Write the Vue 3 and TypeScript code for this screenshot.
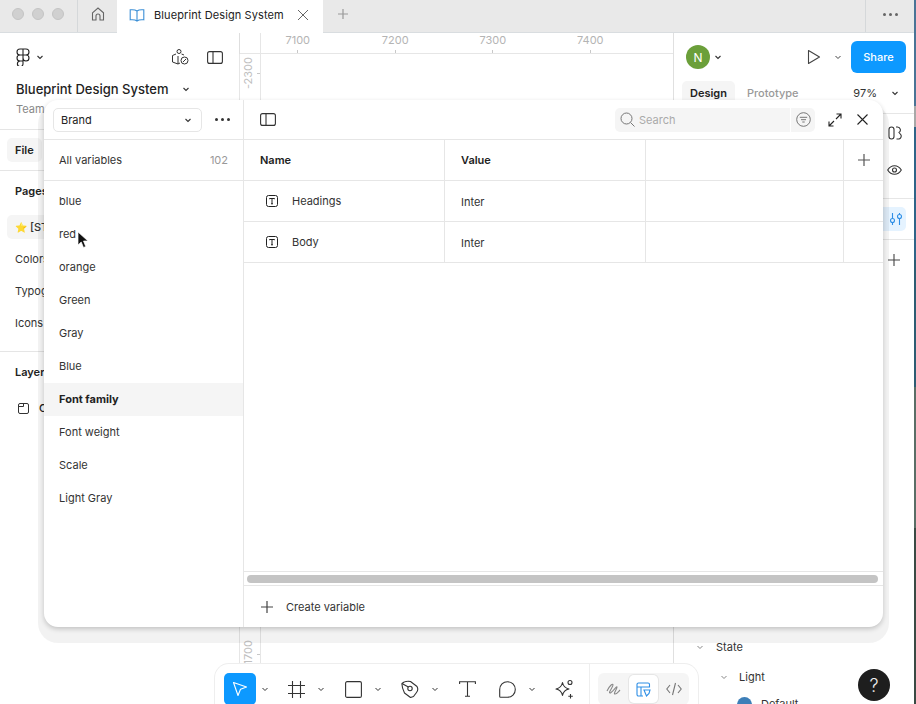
<script setup lang="ts">
const groups = ['blue', 'red', 'orange', 'Green', 'Gray', 'Blue', 'Font family', 'Font weight', 'Scale', 'Light Gray']
const rows = ['Headings', 'Body']
const marks = ['7100', '7200', '7300', '7400']
const chev = 'M1.5 3 4 5.5 6.5 3'
</script>

<template>
  <div class="app">
    <header class="tabs">
      <div class="lights"><i></i><i></i><i></i></div>
      <div class="home">
        <svg width="16" height="16" viewBox="0 0 16 16" fill="none" stroke="#666" stroke-width="1.1"><path d="M2.5 6.8 8 2l5.500 4.800V14h-3.500v-4a2 2 0 0 0-4 0v4H2.500z" /></svg>
      </div>
      <div class="tab">
        <svg width="16" height="14" viewBox="0 0 16 14" fill="none" stroke="#3b8fd6" stroke-width="1.100"><path d="M8 3C6.500 1.800 4 1.500 1.200 1.800v10C4 11.500 6.500 11.800 8 13c1.500-1.200 4-1.500 6.800-1.200v-10C12 1.500 9.500 1.800 8 3zv10" /></svg>
        <span class="tab-name">Blueprint Design System</span>
        <svg width="12" height="12" viewBox="0 0 12 12" stroke="#666" stroke-width="1"><path d="M1 1l10 10M11 1 1 11" /></svg>
      </div>
      <div class="newtab">
        <svg width="12" height="12" viewBox="0 0 12 12" stroke="#999" stroke-width="1.200"><path d="M6 1v10M1 6h10" /></svg>
      </div>
      <div class="tabs-more"><b></b><b></b><b></b></div>
    </header>

    <main class="work">
      <aside class="left">
        <div class="left-top">
          <svg width="14" height="18" viewBox="0 0 14 18" fill="none" stroke="#222" stroke-width="1.100"><path d="M7 1H4a3 3 0 0 0 0 6h3zM7 1h3a3 3 0 0 1 0 6H7zM7 7H4a3 3 0 0 0 0 6h3zM7 7h3a3 3 0 1 1-3 3zM7 13H4a2.800 2.800 0 1 0 3 3z" /></svg>
          <svg class="chev" width="8" height="8" viewBox="0 0 8 8" fill="none" stroke="#333" stroke-width="1.100"><path :d="chev" /></svg>
          <span class="grow"></span>
          <svg width="18" height="18" viewBox="0 0 18 18" fill="none" stroke="#333" stroke-width="1"><circle cx="8" cy="3.500" r="2" /><path d="M5 6 1.500 7.500v6.500L7 16l2-1M10.500 6 13 7M7 8v8" /><circle cx="13.500" cy="12.500" r="3.500" /><path d="m12 14 3-3" /></svg>
          <svg class="panel-ic" width="16" height="13" viewBox="0 0 16 13" fill="none" stroke="#333" stroke-width="1.100"><rect x="0.600" y="0.600" width="14.800" height="11.800" rx="2" /><path d="M6 1v11" /></svg>
        </div>
        <div class="file-title">
          <span>Blueprint Design System</span>
          <svg width="8" height="8" viewBox="0 0 8 8" fill="none" stroke="#333" stroke-width="1.100"><path :d="chev" /></svg>
        </div>
        <div class="team">Team project</div>
        <div class="file-row"><span class="pill">File</span></div>
        <div class="pages">
          <div class="pages-h">Pages</div>
          <div class="page sel"><span class="star">⭐</span> [STYLES]</div>
          <div class="page">Colors</div>
          <div class="page">Typography</div>
          <div class="page">Icons</div>
        </div>
        <div class="layers">
          <div class="pages-h">Layers</div>
          <div class="layer">
            <svg width="11" height="11" viewBox="0 0 11 11" fill="none" stroke="#333" stroke-width="1"><rect x="0.500" y="0.500" width="10" height="10" rx="1.500" /><path d="M0.500 3.500h5v-3" /></svg>
            <span>Cover</span>
          </div>
        </div>
      </aside>

      <section class="canvas">
        <div class="ruler-top">
          <div class="corner"></div>
          <div class="marks">
            <span v-for="m in marks" :key="m" class="mark">{{ m }}</span>
          </div>
        </div>
        <div class="canvas-body">
          <div class="ruler-left">
            <div class="v-row first"><span class="v-mark">-2300</span><i class="tick"></i></div>
            <div class="v-row last"><span class="v-mark">-1700</span><i class="tick"></i></div>
          </div>
        </div>
      </section>

      <aside class="right">
        <div class="right-top">
          <span class="avatar">N</span>
          <svg width="8" height="8" viewBox="0 0 8 8" fill="none" stroke="#333" stroke-width="1.100"><path :d="chev" /></svg>
          <span class="grow"></span>
          <svg width="14" height="16" viewBox="0 0 14 16" fill="none" stroke="#444" stroke-width="1.100"><path d="M1.500 1.500v13L12.500 8z" stroke-linejoin="round" /></svg>
          <svg class="play-chev" width="8" height="8" viewBox="0 0 8 8" fill="none" stroke="#444" stroke-width="1"><path :d="chev" /></svg>
          <button class="share">Share</button>
        </div>
        <div class="right-tabs">
          <span class="design">Design</span>
          <span class="proto">Prototype</span>
          <span class="grow"></span>
          <span class="zoom">97%</span>
          <svg width="8" height="8" viewBox="0 0 8 8" fill="none" stroke="#333" stroke-width="1.100"><path :d="chev" /></svg>
        </div>
        <div class="props">
          <div class="state state-1">
            <svg width="8" height="8" viewBox="0 0 8 8" fill="none" stroke="#888" stroke-width="1"><path :d="chev" /></svg>
            <span>State</span>
          </div>
          <div class="state state-2">
            <svg width="8" height="8" viewBox="0 0 8 8" fill="none" stroke="#888" stroke-width="1"><path :d="chev" /></svg>
            <span>Light</span>
          </div>
          <div class="state state-3"><i class="swatch"></i><span>Default</span></div>
        </div>
      </aside>

      <div class="side-icons">
        <i class="rule r1"></i><i class="rule r2"></i><i class="rule r3"></i>
        <svg class="si-a" width="14" height="14" viewBox="0 0 14 14" fill="none" stroke="#333" stroke-width="1.100"><rect x="1" y="1" width="5" height="12" rx="2.500" /><path d="M8 1h1.500a3 3 0 0 1 1.500 5.500L13 9a3 3 0 0 1-2 4H8.500" /></svg>
        <svg class="si-b" width="15" height="10" viewBox="0 0 15 10" fill="none" stroke="#333" stroke-width="1.100"><path d="M.7 5C2.500 2 5 .7 7.500.7S12.500 2 14.300 5c-1.800 3-4.300 4.300-6.800 4.300S2.500 8 .7 5z" /><circle cx="7.500" cy="5" r="2" /></svg>
        <div class="si-c">
          <svg width="14" height="14" viewBox="0 0 14 14" fill="none" stroke="#2f8fe6" stroke-width="1.100"><path d="M3.500 1v5M3.500 11v2M10.500 1v1M10.500 7v6" /><circle cx="3.500" cy="8.500" r="2" /><circle cx="10.500" cy="4.500" r="2" /></svg>
        </div>
        <svg class="si-d" width="12" height="12" viewBox="0 0 12 12" stroke="#444" stroke-width="1.100"><path d="M6 0v12M0 6h12" /></svg>
      </div>

      <div class="toolbar">
        <div class="tools">
          <span class="slot first">
            <span class="box on"><svg width="16" height="16" viewBox="0 0 16 16" fill="none" stroke="#fff" stroke-width="1.100" stroke-linejoin="round"><path d="M1.500 1.500 14.500 6 8.500 8.300 6 14.500z" /></svg></span>
            <svg class="tchev" width="8" height="8" viewBox="0 0 8 8" fill="none" stroke="#333" stroke-width="1"><path :d="chev" /></svg>
          </span>
          <span class="slot">
            <span class="box"><svg width="17" height="17" viewBox="0 0 17 17" fill="none" stroke="#333" stroke-width="1.100"><path d="M4.500 0v17M12.500 0v17M0 4.500h17M0 12.500h17" /></svg></span>
            <svg class="tchev" width="8" height="8" viewBox="0 0 8 8" fill="none" stroke="#333" stroke-width="1"><path :d="chev" /></svg>
          </span>
          <span class="slot">
            <span class="box"><svg width="17" height="17" viewBox="0 0 17 17" fill="none" stroke="#333" stroke-width="1.100"><rect x="0.600" y="0.600" width="15.800" height="15.800" rx="1.500" /></svg></span>
            <svg class="tchev" width="8" height="8" viewBox="0 0 8 8" fill="none" stroke="#333" stroke-width="1"><path :d="chev" /></svg>
          </span>
          <span class="slot">
            <span class="box"><svg width="18" height="18" viewBox="0 0 18 18" fill="none" stroke="#333" stroke-width="1.100" stroke-linejoin="round"><path d="M1 3.500C3 1.500 7 .8 9.500 1.500l6.500 5c1.300 2.500.8 4.500-.5 6l-3 4-3 1-6-4.500C2 10 .8 6 1 3.500z" /><circle cx="9" cy="8.500" r="2.200" /><path d="M1 3.500 7.300 7" /></svg></span>
            <svg class="tchev" width="8" height="8" viewBox="0 0 8 8" fill="none" stroke="#333" stroke-width="1"><path :d="chev" /></svg>
          </span>
          <span class="slot text-slot">
            <span class="box"><svg width="17" height="16" viewBox="0 0 17 16" fill="none" stroke="#333" stroke-width="1.100"><path d="M.6 3V.8h15.800V3M8.500.8v14.500M6 15.300h5" /></svg></span>
          </span>
          <span class="slot">
            <span class="box"><svg width="17" height="17" viewBox="0 0 17 17" fill="none" stroke="#333" stroke-width="1.100"><path d="M8.500.7a7.800 7.800 0 0 1 0 15.600H1.500a.8.800 0 0 1-.8-.8V8.500A7.800 7.800 0 0 1 8.500.7z" /></svg></span>
            <svg class="tchev" width="8" height="8" viewBox="0 0 8 8" fill="none" stroke="#333" stroke-width="1"><path :d="chev" /></svg>
          </span>
          <span class="slot">
            <span class="box"><svg width="20" height="20" viewBox="0 0 20 20" fill="none" stroke="#333" stroke-width="1.100" stroke-linejoin="round"><path d="M8.500 3.500c.8 4 2.500 5.700 6.500 6.500-4 .8-5.700 2.500-6.500 6.500C7.700 12.500 6 10.800 2 10c4-.8 5.700-2.500 6.500-6.500z" /><circle cx="16" cy="3.500" r="2" /><path d="M16.500 15v4.500M14.300 17.300h4.500" /></svg></span>
          </span>
        </div>
        <div class="modes">
          <span class="mode">
            <svg width="16" height="16" viewBox="0 0 16 16" fill="none" stroke="#888" stroke-width="1.100"><path d="M1 10c3-6 6-8 6-6s-5 8-3 8 7-8 7-6-4 7-2 7 3-2 5-4" /></svg>
          </span>
          <span class="mode on">
            <svg width="15" height="15" viewBox="0 0 15 15" fill="none" stroke="#2f8fe6" stroke-width="1.100"><path d="M7 14H2.500A1.500 1.500 0 0 1 1 12.500v-10A1.500 1.500 0 0 1 2.500 1H12a1.500 1.500 0 0 1 1.500 1.500V5H1M5 5v9" /><path d="M8 8h6l-1 3.500L10.500 14z" /></svg>
          </span>
          <span class="mode">
            <svg width="16" height="14" viewBox="0 0 16 14" fill="none" stroke="#777" stroke-width="1.100"><path d="M4 3 .8 7 4 11M12 3l3.200 4L12 11M9.500 1 6.500 13" /></svg>
          </span>
        </div>
      </div>

      <button class="help">?</button>

      <div class="modal">
        <aside class="m-side">
          <div class="m-top">
            <div class="select">
              <span>Brand</span>
              <svg width="8" height="8" viewBox="0 0 8 8" fill="none" stroke="#333" stroke-width="1.100"><path :d="chev" /></svg>
            </div>
            <div class="dots"><b></b><b></b><b></b></div>
          </div>
          <div class="all"><span>All variables</span><span class="count">102</span></div>
          <ul class="groups">
            <li v-for="g in groups" :key="g" :class="{ active: g === 'Font family' }">{{ g }}</li>
          </ul>
          <svg class="cursor" width="12" height="18" viewBox="0 0 12 18"><path d="M1 1v13l3.200-3 2.300 5.500 2.200-1L6.500 10H11z" fill="#111" stroke="#fff" stroke-width="0.700" /></svg>
        </aside>
        <section class="m-main">
          <div class="m-head">
            <svg class="panel-ic" width="16" height="13" viewBox="0 0 16 13" fill="none" stroke="#333" stroke-width="1.100"><rect x="0.600" y="0.600" width="14.800" height="11.800" rx="2" /><path d="M6 1v11" /></svg>
            <span class="grow"></span>
            <div class="search">
              <svg width="15" height="15" viewBox="0 0 15 15" fill="none" stroke="#777" stroke-width="1"><circle cx="6.500" cy="6.500" r="5.500" /><path d="m10.500 10.500 4 4" /></svg>
              <span>Search</span>
            </div>
            <div class="filter">
              <svg width="15" height="15" viewBox="0 0 15 15" fill="none" stroke="#777" stroke-width="1"><circle cx="7.500" cy="7.500" r="6.800" /><path d="M3.800 5.300h7.400M5 7.700h5M6.300 10h2.400" /></svg>
            </div>
            <svg class="expand" width="14" height="14" viewBox="0 0 14 14" fill="none" stroke="#222" stroke-width="1.100"><path d="M8.500 1H13v4.500M13 1 8 6M1 8.500V13h4.500M1 13l5-5" /></svg>
            <svg class="close" width="11" height="11" viewBox="0 0 11 11" stroke="#222" stroke-width="1.100"><path d="m.5.500 10 10M10.500.5l-10 10" /></svg>
          </div>
          <div class="table">
            <div class="tr th">
              <div class="c c-name">Name</div>
              <div class="c c-val">Value</div>
              <div class="c c-empty"></div>
              <div class="c c-add">
                <svg width="12" height="12" viewBox="0 0 12 12" stroke="#555" stroke-width="1.200"><path d="M6 0v12M0 6h12" /></svg>
              </div>
            </div>
            <div v-for="r in rows" :key="r" class="tr">
              <div class="c c-name td-name">
                <svg width="12" height="12" viewBox="0 0 12 12" fill="none" stroke="#222" stroke-width="1"><rect x="0.500" y="0.500" width="11" height="11" rx="2" /><path d="M3.500 4.200V3.500h5v.7M6 3.500V8.800M5 8.800h2" /></svg>
                <span>{{ r }}</span>
              </div>
              <div class="c c-val td-val">Inter</div>
              <div class="c c-empty"></div>
              <div class="c c-add"></div>
            </div>
          </div>
          <div class="scroll"><i></i></div>
          <div class="create">
            <svg width="12" height="12" viewBox="0 0 12 12" stroke="#444" stroke-width="1.200"><path d="M6 0v12M0 6h12" /></svg>
            <span>Create variable</span>
          </div>
        </section>
      </div>
    </main>

    <div class="edge"></div>
  </div>
</template>

<style scoped>
.app {
  position: relative;
  width: 916px;
  height: 704px;
  overflow: hidden;
  background: #fff;
  color: #222;
  font-family: Inter, "Liberation Sans", sans-serif;
  font-size: 11px;
  display: flex;
  flex-direction: column;
}
.grow { flex: 1; }
.tabs {
  height: 33px;
  flex: none;
  display: flex;
  align-items: stretch;
  background: #e9e9e9;
  border-bottom: 1px solid #d9dde0;
  box-sizing: border-box;
}
.lights {
  width: 78px;
  box-sizing: border-box;
  padding: 0 0 4px 12px;
  display: flex;
  align-items: center;
  gap: 8px;
  border-right: 1px solid #d5d8da;
}
.lights i { width: 12px; height: 12px; border-radius: 50%; background: #d0d0d0; border: 0.5px solid #c4c4c4; box-sizing: border-box; }
.home { width: 39px; padding-bottom: 4px; box-sizing: border-box; display: flex; align-items: center; justify-content: center; }
.tab {
  width: 206px;
  height: 33px;
  background: #fff;
  display: flex;
  align-items: center;
  padding: 0 14px 4px 12px;
  box-sizing: border-box;
}
.tab-name { flex: 1; margin-left: 9px; font-size: 11px; letter-spacing: 0.1px; color: #222; white-space: nowrap; }
.newtab { width: 40px; padding-bottom: 4px; box-sizing: border-box; display: flex; align-items: center; justify-content: center; }
.tabs-more { margin-left: auto; width: 49px; margin-right: 2px; padding-bottom: 4px; box-sizing: border-box; border-left: 1px solid #d5d8da; display: flex; align-items: center; justify-content: center; gap: 3px; }
.tabs-more b, .dots b { width: 3px; height: 3px; border-radius: 50%; background: #666; display: block; }

.work { flex: 1; display: flex; position: relative; min-height: 0; }

.left { width: 240px; flex: none; box-sizing: border-box; border-right: 1px solid #dedede; background: #fff; }
.left-top { height: 48px; display: flex; align-items: center; padding: 0 16px 0 16px; box-sizing: border-box; }
.left-top .chev { margin-left: 6px; }
.left-top .panel-ic { margin-left: 18px; }
.file-title { display: flex; align-items: center; gap: 14px; padding-left: 16px; font-size: 13px; font-weight: 500; height: 16px; }
.team { padding-left: 16px; margin-top: 4px; color: #888; height: 29px; box-sizing: border-box; line-height: 16px; border-bottom: 1px solid #e5e5e5; }
.file-row { height: 41px; box-sizing: border-box; display: flex; align-items: center; padding-left: 7px; border-bottom: 1px solid #e5e5e5; }
.pill { background: #f5f5f5; border-radius: 5px; padding: 5px 8px; font-weight: 600; height: 24px; box-sizing: border-box; line-height: 14px; }
.pages { height: 181px; border-bottom: 1px solid #e5e5e5; box-sizing: border-box; padding-top: 12px; }
.pages-h { padding-left: 15px; font-weight: 600; height: 16px; line-height: 16px; }
.page { margin-top: 16px; padding-left: 15px; height: 16px; line-height: 16px; color: #333; white-space: nowrap; }
.page.sel { background: #f5f5f5; border-radius: 5px; margin: 16px 0 0 7px; padding: 4px 0 4px 8px; height: 24px; box-sizing: border-box; font-weight: 500; }
.star { font-size: 10px; font-family: "Noto Sans", sans-serif; }
.page.sel + .page { margin-top: 12px; }
.layers { padding-top: 12px; }
.layer { display: flex; align-items: center; gap: 10px; margin-top: 20px; padding-left: 18px; font-weight: 500; height: 16px; }

.canvas { flex: 1; min-width: 0; display: flex; flex-direction: column; background: #fff; }
.ruler-top {
  height: 21px;
  flex: none;
  box-sizing: border-box;
  border-bottom: 1px solid #e6e6e6;
  display: flex;
  color: #b4b4b4;
  font-size: 11px;
}
.corner { width: 21px; flex: none; box-sizing: border-box; border-right: 1px solid #e6e6e6; }
.marks { display: flex; margin-left: -12px; }
.mark { width: 97.500px; display: flex; flex-direction: column; align-items: center; justify-content: space-between; line-height: 14px; }
.mark::after { content: ""; width: 1px; height: 3px; background: #c8c8c8; }
.canvas-body { flex: 1; min-height: 0; display: flex; }
.ruler-left {
  width: 22px;
  box-sizing: border-box;
  margin-left: -1px;
  border-right: 1px solid #e6e6e6;
  border-left: 1px solid #e6e6e6;
  color: #c0c0c0;
  display: flex;
  flex-direction: column;
}
.v-row { display: flex; align-items: center; justify-content: space-between; }
.v-row.first { margin-top: 3px; }
.v-row.last { margin-top: 551px; }
.v-mark { writing-mode: vertical-rl; transform: rotate(180deg); line-height: 16px; }
.tick { width: 3px; height: 1px; background: #c8c8c8; }

.right { width: 243px; flex: none; box-sizing: border-box; border-left: 1px solid #e0e0e0; background: #fff; position: relative; }
.right-top { height: 48px; display: flex; align-items: center; padding: 0 10px 0 12px; box-sizing: border-box; }
.avatar { width: 24px; height: 24px; border-radius: 50%; background: #6b9f3a; color: #fff; font-size: 12px; display: flex; align-items: center; justify-content: center; margin-right: 4px; }
.play-chev { margin: 0 9px 0 13px; }
.share { width: 55px; height: 32px; border: 0; border-radius: 6px; background: #0d99ff; color: #fff; font: 500 11px Inter, sans-serif; }
.right-tabs { display: flex; align-items: center; height: 24px; padding: 0 17px 0 8px; font-size: 11px; }
.design { background: #f5f5f5; border-radius: 5px; padding: 4px 8px; font-weight: 600; margin-right: 4px; height: 24px; box-sizing: border-box; line-height: 16px; }
.proto { padding: 0 8px; color: #999; font-weight: 500; }
.zoom { margin-right: 14px; color: #333; }
.props { position: absolute; left: 0; right: 0; top: 606px; font-size: 11px; }
.state { position: absolute; display: flex; align-items: center; color: #333; height: 16px; }
.state-1 { left: 22px; top: 0; gap: 12px; }
.state-2 { left: 46px; top: 30px; gap: 11px; }
.state-3 { left: 63px; top: 57px; gap: 9px; }
.swatch { width: 15px; height: 15px; border-radius: 50%; background: #3d7fb8; }

.side-icons { position: absolute; left: 883px; top: 0; width: 31px; height: 260px; z-index: 1; }
.side-icons svg { position: absolute; }
.rule { position: absolute; left: 0; right: 0; height: 1px; background: #e6e6e6; }
.r1 { top: 80px; }
.r2 { top: 165px; }
.r3 { top: 206px; }
.si-a { left: 5px; top: 93px; }
.si-b { left: 4px; top: 132px; }
.si-c { position: absolute; left: 0; top: 174px; width: 23px; height: 24px; background: #e5f3ff; border-radius: 0 5px 5px 0; display: flex; align-items: center; justify-content: center; }
.side-icons .si-c svg { position: static; margin-left: 2px; }
.si-d { left: 5px; top: 221px; }

.toolbar {
  position: absolute;
  left: 215px;
  top: 631px;
  width: 483px;
  height: 60px;
  background: #fff;
  border-radius: 14px 14px 0 0;
  box-shadow: 0 0 0 1px #eee;
  display: flex;
  z-index: 1;
}
.tools { width: 375px; display: flex; align-items: flex-start; padding: 9px 0 0 9px; box-sizing: border-box; border-right: 1px solid #eee; }
.slot { width: 57px; height: 32px; flex: none; display: flex; align-items: center; }
.slot.first { width: 56px; }
.slot.text-slot { width: 40px; }
.box { width: 32px; height: 32px; flex: none; border-radius: 5px; display: flex; align-items: center; justify-content: center; }
.box.on { background: #0d99ff; }
.tchev { margin-left: 5px; flex: none; }
.modes { margin: 9px 0 0 8px; background: #f5f5f5; border-radius: 6px; height: 32px; width: 91px; display: flex; align-items: center; }
.mode { width: 31px; height: 32px; display: flex; align-items: center; justify-content: center; }
.mode.on { width: 29px; background: #fff; border-radius: 5px; box-shadow: 0 0 0 1px #e6e6e6; height: 28px; }

.help { position: absolute; left: 858px; top: 636px; width: 32px; height: 32px; border-radius: 50%; border: 0; background: #1e1e1e; color: #eee; font: 300 18px Inter, sans-serif; z-index: 2; padding: 0; }

.modal {
  position: absolute;
  left: 44px;
  top: 67px;
  width: 839px;
  height: 527px;
  background: #fff;
  border-radius: 14px;
  box-shadow: 0 2px 5px rgba(0, 0, 0, 0.2), 0 10px 0 6px rgba(0, 0, 0, 0.05);
  display: flex;
  z-index: 3;
}
.m-side { width: 200px; flex: none; box-sizing: border-box; border-right: 1px solid #e6e6e6; position: relative; }
.m-top { height: 40px; display: flex; align-items: center; padding-left: 9px; box-sizing: border-box; border-bottom: 1px solid #e6e6e6; }
.select { width: 149px; height: 24px; box-sizing: border-box; border: 1px solid #e6e6e6; border-radius: 5px; display: flex; align-items: center; justify-content: space-between; padding: 0 9px 0 7px; font-size: 11px; color: #222; }
.dots { display: flex; gap: 3px; margin-left: 13px; }
.dots b { background: #333; }
.all { height: 41px; box-sizing: border-box; border-bottom: 1px solid #e6e6e6; display: flex; align-items: center; justify-content: space-between; padding: 0 15px 0 15px; color: #333; }
.count { color: #999; }
.groups { list-style: none; margin: 0; padding: 4px 0 0; }
.groups li { height: 33px; line-height: 33px; padding-left: 15px; color: #333; }
.groups li.active { background: #f5f5f5; font-weight: 700; color: #222; }
.cursor { position: absolute; left: 33px; top: 131px; }

.m-main { flex: 1; min-width: 0; display: flex; flex-direction: column; }
.m-head { height: 40px; flex: none; box-sizing: border-box; border-bottom: 1px solid #e6e6e6; display: flex; align-items: center; padding: 0 15px 0 16px; }
.search { width: 175px; height: 24px; background: #f5f5f5; border-radius: 5px 0 0 5px; display: flex; align-items: center; gap: 4px; padding-left: 5px; box-sizing: border-box; color: #aaa; font-size: 11px; }
.filter { width: 24px; height: 24px; margin-left: 1px; background: #f5f5f5; border-radius: 0 5px 5px 0; display: flex; align-items: center; justify-content: center; }
.expand { margin-left: 13px; }
.close { margin-left: 15px; }
.table { flex: 1; min-height: 0; }
.tr { display: flex; height: 41px; box-sizing: border-box; border-bottom: 1px solid #e6e6e6; }
.c { box-sizing: border-box; border-right: 1px solid #e6e6e6; display: flex; align-items: center; }
.c-name { width: 201px; padding-left: 16px; }
.c-val { width: 201px; padding-left: 16px; }
.c-empty { width: 198px; }
.c-add { width: 39px; border-right: 0; justify-content: center; }
.th { font-weight: 600; color: #222; }
.td-name { padding-left: 22px; gap: 14px; color: #333; }
.td-val { color: #333; padding-top: 1px; }
.scroll { height: 15px; box-sizing: border-box; border-top: 1px solid #e6e6e6; border-bottom: 1px solid #e6e6e6; padding: 3px 5px 1px 3px; flex: none; }
.scroll i { display: block; height: 8px; border-radius: 4px; background: #c4c4c4; }
.create { height: 41px; flex: none; display: flex; align-items: center; gap: 13px; padding-left: 17px; color: #333; }

.edge { position: absolute; right: 0; top: 0; width: 2px; height: 704px; background: linear-gradient(#4a7496 0 15%, #a8a8a8 15% 18%, #2f6488 18% 37%, #2d5c73 37% 55%, #5a6e66 55% 75%, #3a4a44 75%); }
</style>
